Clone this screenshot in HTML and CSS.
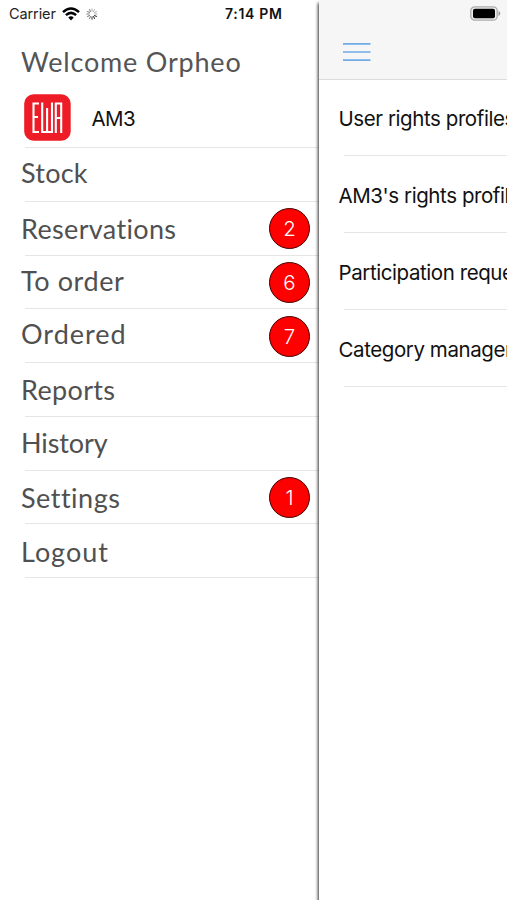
FILE: index.html
```html
<!DOCTYPE html>
<html lang="en">
<head>
<meta charset="utf-8">
<title>EWA</title>
<link rel="stylesheet" href="styles.css">
</head>
<body>
<div class="app">
  <aside class="drawer">
    <div class="status">
      <span class="carrier">Carrier</span>
      <svg class="wifi" width="18" height="14" viewBox="0 0 18 14" fill="none" stroke="#000" stroke-width="2.5"><path d="M1 5.1Q9-2 17 5.1M3.9 8.1Q9 3.6 14.1 8.1"/><path d="M6.3 10.4Q9 8.2 11.7 10.4L9 13.4Z" fill="#000" stroke="none"/></svg>
      <svg class="spinner" width="12" height="12" viewBox="0 0 12 12" stroke-width="1.1" stroke-linecap="round"><path stroke="#bbb" d="M6 .7v2.5M8.5 1.5L7.4 3.5M10.5 3.5L8.4 4.7M11.3 6H8.8"/><path stroke="#444" d="M10.5 8.5L8.5 7.4M8.6 10.5L7.4 8.5M6 11.3V8.8"/><path stroke="#888" d="M3.4 10.5L4.6 8.5M1.5 8.5L3.5 7.4M.7 6h2.5M1.5 3.5L3.5 4.6M3.4 1.5L4.6 3.5"/></svg>
      <span class="time">7:14 PM</span>
    </div>
    <h1 class="welcome">Welcome Orpheo</h1>
    <div class="account">
      <svg width="48" height="48" viewBox="0 0 48 48"><rect x=".2" y=".2" width="46.5" height="46.5" rx="9.5" fill="#ed1c27"/><path d="M15 9.5H9.5V38H15M9.5 23H14M18.2 8.5V38H28V8.5M23.1 14V38M31.8 39V9.5H37.2V39M31.8 24H37.2" fill="none" stroke="#fff" stroke-width="2.1"/></svg>
      <span class="name">AM3</span>
    </div>
    <nav class="menu">
      <a class="item stock"><span class="label">Stock</span></a>
      <a class="item reservations"><span class="label">Reservations</span><b class="badge">2</b></a>
      <a class="item to-order"><span class="label">To order</span><b class="badge">6</b></a>
      <a class="item ordered"><span class="label">Ordered</span><b class="badge">7</b></a>
      <a class="item reports"><span class="label">Reports</span></a>
      <a class="item history"><span class="label">History</span></a>
      <a class="item settings"><span class="label">Settings</span><b class="badge">1</b></a>
      <a class="item logout"><span class="label">Logout</span></a>
    </nav>
  </aside>
  <main class="page">
    <header class="bar">
      <svg class="battery" width="31" height="15" viewBox="0 0 31 15"><rect x=".8" y=".8" width="26.4" height="13.4" rx="4" fill="#eee" stroke="#aaa" stroke-width="1.3"/><rect x="3" y="2.8" width="22" height="9.4" rx="2" fill="#000"/><path d="M28.5 5v5Q30.3 9.3 30.3 7.5T28.5 5Z" fill="#999"/></svg>
      <svg class="burger" width="28" height="20" viewBox="0 0 28 20" stroke="#6fabe6" stroke-width="1.7"><path d="M0 1.8H27.5M0 10H27.5M0 18.2H27.5"/></svg>
    </header>
    <div class="list">
      <div class="row"><span>User rights profiles</span></div>
      <div class="row"><span>AM3's rights profile</span></div>
      <div class="row"><span>Participation requests</span></div>
      <div class="row"><span>Category management</span></div>
    </div>
  </main>
</div>
</body>
</html>
```
FILE: styles.css
```css
* { box-sizing: border-box; }
body { margin: 0; background: #fff; }
.app { display: flex; width: 507px; height: 900px; overflow: hidden; font-family: Inter, "Liberation Sans", sans-serif; }
.drawer { width: 319px; flex: none; }
.status { display: flex; align-items: center; height: 27px; padding-left: 9px; font-size: 14.5px; color: #222; }
.carrier { width: 53px; letter-spacing: -.1px; }
.spinner { margin-left: 6px; }
.time { margin-left: 127px; font-weight: 600; font-size: 14px; letter-spacing: .7px; white-space: nowrap; color: #111; }
.welcome { margin: 0; padding: 17px 0 0 21px; height: 63px; font: 400 27px/36px Lato, sans-serif; letter-spacing: .8px; color: #555; white-space: nowrap; }
.account { display: flex; align-items: center; height: 57px; padding-bottom: 2px; margin-left: 24px; }
.account svg { flex: none; }
.name { margin: 1px 0 0 19.5px; font-size: 20.5px; letter-spacing: -.6px; color: #111; }
.menu { display: block; }
.item { display: flex; height: 53.75px; margin-left: 25px; border-top: 1px solid #e6e6e6; justify-content: space-between; }
.item:last-child { height: 54.75px; border-bottom: 1px solid #e6e6e6; }
.label { margin-left: -4px; font: 400 27px/36px Lato, sans-serif; color: #505050; }
.stock { padding-top: 7px; letter-spacing: .25px; }
.reservations { padding-top: 9px; letter-spacing: .35px; }
.to-order { padding-top: 7px; letter-spacing: .6px; }
.ordered { padding-top: 7px; letter-spacing: 1px; }
.reports { padding-top: 9px; letter-spacing: .35px; }
.history { padding-top: 8px; letter-spacing: -.1px; }
.settings { padding-top: 9px; letter-spacing: .5px; }
.logout { padding-top: 10px; letter-spacing: 1px; }
.badge { align-self: flex-start; display: flex; align-items: center; justify-content: center; width: 41px; height: 41px; margin-right: 9px; border: 1.5px solid #400; border-radius: 50%; background: #fe0000; color: #fff; font-weight: 300; font-size: 20.5px; letter-spacing: 0; }
.reservations .badge { margin-top: -2.5px; }
.to-order .badge { margin-top: -.5px; }
.ordered .badge { margin-top: 0; }
.settings .badge { margin-top: -2.5px; }
.page { width: 188px; flex: none; background: #fff; box-shadow: -1px 3px 3px rgba(0,0,0,.8); }
.bar { height: 79.5px; background: #f7f6f7; border-bottom: 1px solid #ddd; padding: 5.5px 0 0 24px; }
.battery { display: block; margin-left: 127px; }
.burger { display: block; margin-top: 21px; }
.list { overflow: hidden; }
.row { display: flex; align-items: center; height: 77px; padding-top: 3px; margin-left: 25px; border-bottom: 1px solid #e6e6e6; }
.row:first-child { height: 76px; }
.row span { margin-left: -5.5px; font-size: 20.5px; letter-spacing: -.42px; color: #111; white-space: nowrap; }
```
